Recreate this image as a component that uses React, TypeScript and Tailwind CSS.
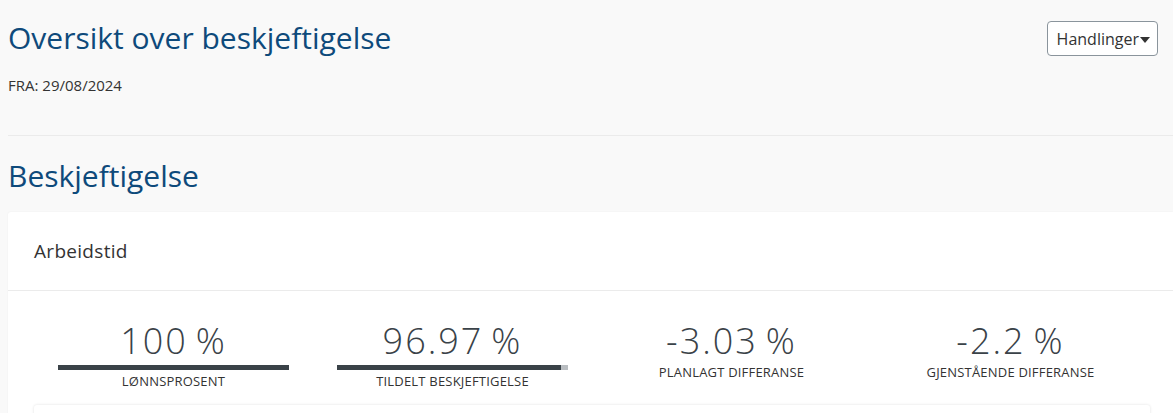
import React from 'react';

type Stat = { value: string; label: string; bar?: number };

const stats: Stat[] = [
  { value: '100\u2009%', label: 'Lønnsprosent', bar: 100 },
  { value: '96.97\u2009%', label: 'Tildelt beskjeftigelse', bar: 96.97 },
  { value: '-3.03\u2009%', label: 'Planlagt differanse' },
  { value: '-2.2\u2009%', label: 'Gjenstående differanse' },
];

function StatBlock({ stat }: { stat: Stat }) {
  const hasBar = stat.bar !== undefined;
  return (
    <div className="flex flex-col items-center">
      <div className="text-[36px] leading-9 font-light tracking-[2px] text-[#3a4248]">{stat.value}</div>
      {hasBar && (
        <div className="mt-[6px] h-[5px] w-[231px] bg-[#b9bdc1]">
          <div className="h-full bg-[#3a4248]" style={{ width: `${stat.bar}%` }} />
        </div>
      )}
      <div
        className={`${hasBar ? 'mt-[3px]' : 'mt-[5px]'} text-[13px] leading-4 uppercase tracking-[0.2px] text-[#333]`}
      >
        {stat.label}
      </div>
    </div>
  );
}

export default function App() {
  return (
    <div className="min-h-screen bg-[#f9f9f9] font-['Open_Sans',sans-serif] text-[#333] overflow-hidden">
      <div className="pl-2 pr-[15px] pt-5">
        <div className="flex items-start justify-between">
          <h1 className="text-[30px] leading-9 text-[#0e4a7b]">Oversikt over beskjeftigelse</h1>
          <button className="mt-px flex h-[35px] items-center rounded-sm border border-[#8a949c] bg-white pl-[9px] pr-[7px] text-[16px] font-medium text-[#333]">
            Handlinger
            <svg width="10" height="6" viewBox="0 0 10 6" className="ml-px mt-[2px]">
              <path d="M0 0h10L5 6z" fill="#333" />
            </svg>
          </button>
        </div>
        <div className="mt-[19px] text-[15px] leading-5">FRA: 29/08/2024</div>
      </div>
      <div className="ml-2 mt-[40px] border-t border-[#ebebeb]" />
      <h2 className="ml-2 mt-[22px] text-[30px] leading-9 text-[#0e4a7b]">Beskjeftigelse</h2>
      <div className="ml-2 mt-[18px] rounded-tl-[3px] bg-white shadow-[0_0_2px_rgba(0,0,0,0.06)]">
        <div className="flex h-[78px] items-center pl-[26px] text-[19px] tracking-[0.3px] text-[#333]">Arbeidstid</div>
        <div className="border-t border-[#ebebeb]" />
        <div className="pl-[26px] pt-[32px]">
          <div className="grid grid-cols-[repeat(4,279px)] items-start">
            {stats.map((s) => (
              <StatBlock key={s.label} stat={s} />
            ))}
          </div>
          <div className="mt-4 h-10 w-[1116px] rounded-[3px] bg-white shadow-[0_0_3px_rgba(0,0,0,0.12)]" />
        </div>
      </div>
    </div>
  );
}
